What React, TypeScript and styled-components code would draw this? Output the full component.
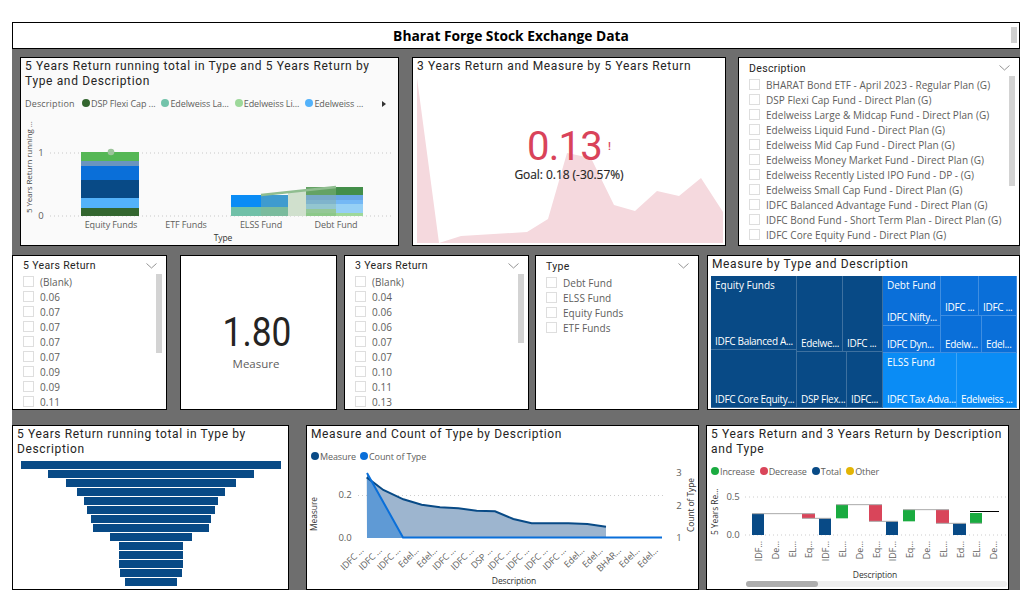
import React from 'react';
import styled, { createGlobalStyle } from 'styled-components';

const GlobalStyle = createGlobalStyle`
  html, body {
    margin: 0;
    padding: 0;
    background: #fff;
  }
`;

const Page = styled.div`
  width: 1008px;
  margin: 22px 0 0 12px;
  font-family: 'Open Sans', 'Noto Sans', sans-serif;
`;

const TitleBar = styled.header`
  position: relative;
  box-sizing: border-box;
  height: 27px;
  border: 1px solid #000;
  background: #fff;
  display: flex;
  align-items: center;
  justify-content: center;
  padding-right: 10px;
  font-size: 13.8px;
  font-weight: 700;
  color: #000;
`;

const TitleScroll = styled.div`
  position: absolute;
  right: 2px;
  top: 4px;
  width: 6px;
  height: 16px;
  background: #cfcfcf;
`;

const Panel = styled.main`
  background: #6e6e6e;
  height: 541px;
  padding-top: 8px;
  box-sizing: border-box;
`;

const Row = styled.section<{ $height: number; $mb?: number }>`
  display: flex;
  height: ${(p) => p.$height}px;
  margin-bottom: ${(p) => p.$mb ?? 0}px;
`;

const Card = styled.article<{ $w: number; $left?: number; $bg?: string }>`
  position: relative;
  box-sizing: border-box;
  width: ${(p) => p.$w}px;
  margin-left: ${(p) => p.$left ?? 0}px;
  flex: none;
  border: 1px solid #000;
  background: ${(p) => p.$bg ?? '#fff'};
  overflow: hidden;
  display: flex;
  flex-direction: column;
`;

const CardTitle = styled.h2`
  margin: 0;
  padding: 1px 4px 0 4px;
  font-family: 'Roboto', 'Noto Sans', sans-serif;
  font-size: 12px;
  font-weight: 400;
  line-height: 15px;
  letter-spacing: 0.64px;
  color: #252423;
`;

const Legend = styled.div<{ $left: number; $top: number }>`
  display: flex;
  align-items: center;
  gap: 3px;
  height: 14px;
  margin: ${(p) => p.$top}px 0 0 ${(p) => p.$left}px;
  font-size: 9px;
  letter-spacing: -0.1px;
  color: #605e5c;
  white-space: nowrap;
`;

const LegendName = styled.span`
  width: 54px;
  letter-spacing: 0.15px;
`;

const LegendItem = styled.span<{ $mr?: number }>`
  display: inline-flex;
  align-items: center;
  gap: 1px;
  margin-right: ${(p) => p.$mr ?? 0}px;
`;

const Dot = styled.i<{ $color: string }>`
  width: 8px;
  height: 8px;
  border-radius: 50%;
  background: ${(p) => p.$color};
`;

const LegendArrow = styled.span`
  position: absolute;
  right: 12px;
  top: 43px;
  width: 0;
  height: 0;
  border-left: 4px solid #333;
  border-top: 3px solid transparent;
  border-bottom: 3px solid transparent;
`;

const Chart = styled.svg`
  display: block;
  flex: none;
  font-family: 'Open Sans', 'Noto Sans', sans-serif;
`;

const GaugeValue = styled.div`
  position: absolute;
  left: 0;
  right: 0;
  top: 69px;
  display: flex;
  flex-direction: column;
  align-items: center;
`;

const GaugeNumber = styled.div`
  position: relative;
  font-family: 'Roboto', sans-serif;
  font-size: 40px;
  line-height: 40px;
  color: #d9435a;
  letter-spacing: -0.8px;
  padding-right: 9px;
`;

const GaugeBang = styled.span`
  position: absolute;
  right: 0;
  top: 13px;
  font-size: 11px;
  font-weight: 500;
  line-height: 14px;
  letter-spacing: 0;
`;

const GaugeGoal = styled.div`
  font-size: 12px;
  line-height: 14px;
  margin-top: 1px;
  color: #252423;
  letter-spacing: -0.05px;
  -webkit-text-stroke: 0.15px #252423;
`;

const SlicerHead = styled.div<{ $left: number }>`
  display: flex;
  align-items: center;
  justify-content: space-between;
  height: 19px;
  padding: 1px 9px 0 ${(p) => p.$left}px;
  box-sizing: border-box;
  font-family: 'Roboto', sans-serif;
  font-size: 10.5px;
  letter-spacing: 0.35px;
  color: #252423;
`;

const SlicerList = styled.ul<{ $left: number }>`
  list-style: none;
  margin: 0;
  padding: 0 0 0 ${(p) => p.$left}px;
`;

const SlicerRow = styled.li<{ $gap: number }>`
  display: flex;
  align-items: center;
  height: 15px;
  gap: ${(p) => p.$gap}px;
  font-size: 10px;
  letter-spacing: 0.04px;
  color: #605e5c;
  white-space: nowrap;
`;

const Check = styled.span`
  box-sizing: border-box;
  width: 11px;
  height: 11px;
  flex: none;
  border: 1px solid #dedede;
  background: #fff;
`;

const ScrollThumb = styled.div<{ $right: number; $top: number; $h: number }>`
  position: absolute;
  right: ${(p) => p.$right}px;
  top: ${(p) => p.$top}px;
  width: 6px;
  height: ${(p) => p.$h}px;
  background: #d3d3d3;
`;

const KpiCard = styled(Card)`
  align-items: center;
  justify-content: center;
  padding: 16px 3px 0 0;
`;

const KpiValue = styled.div`
  font-family: 'Roboto', sans-serif;
  font-size: 41px;
  line-height: 44px;
  color: #252423;
  transform: scaleX(0.86);
`;

const KpiLabel = styled.div`
  font-size: 11.5px;
  line-height: 16px;
  margin: 2px 2px 0 0;
  color: #605e5c;
`;

const Treemap = styled.div`
  display: flex;
  flex-direction: column;
  width: 306px;
  height: 132px;
  margin: 4px 0 0 3px;
`;

const TreeRow = styled.div<{ $h?: number }>`
  display: flex;
  ${(p) => (p.$h ? `height: ${p.$h}px; flex: none;` : 'flex: 1;')}
`;

const TreeCol = styled.div<{ $w: number }>`
  display: flex;
  flex-direction: column;
  width: ${(p) => p.$w}px;
  flex: none;
`;

const Tile = styled.div<{ $color: string; $w?: number; $h?: number }>`
  position: relative;
  box-sizing: border-box;
  ${(p) => (p.$w ? `width: ${p.$w}px; flex: none;` : 'flex: 1;')}
  ${(p) => (p.$h ? `height: ${p.$h}px; flex: none;` : '')}
  background: ${(p) => p.$color};
  box-shadow: inset -1px -1px 0 rgba(255, 255, 255, 0.22);
  color: #fff;
  font-size: 10px;
  letter-spacing: -0.32px;
  display: flex;
  flex-direction: column;
  justify-content: space-between;
  padding: 2px 3px 2px 4px;
  white-space: nowrap;
  overflow: hidden;
`;

const TileLabel = styled.span<{ $end?: boolean; $group?: boolean }>`
  line-height: 14px;
  ${(p) => (p.$end ? 'margin-top: auto;' : '')}
  ${(p) => (p.$group ? 'letter-spacing: 0;' : '')}
`;

const Funnel = styled.div`
  display: flex;
  flex-direction: column;
  align-items: center;
  gap: 1px;
  margin-top: 4px;
`;

const FunnelBar = styled.div<{ $w: number }>`
  width: ${(p) => p.$w}px;
  height: 8px;
  background: #084a86;
`;

const Tiny = ({ x, y, children, anchor, rotate, size = 9, fill = '#605e5c', weight }: {
  x: number; y: number; children: React.ReactNode; anchor?: 'start' | 'middle' | 'end';
  rotate?: number; size?: number; fill?: string; weight?: number;
}) => (
  <text
    x={x}
    y={y}
    fontSize={size}
    fill={fill}
    fontWeight={weight}
    textAnchor={anchor ?? 'middle'}
    letterSpacing={-0.1}
    transform={rotate ? `rotate(${rotate} ${x} ${y})` : undefined}
  >
    {children}
  </text>
);

const Chevron = () => (
  <svg width="11" height="6" viewBox="0 0 11 6">
    <polyline points="0.5,0.5 5.5,5 10.5,0.5" fill="none" stroke="#7a7a7a" strokeWidth="0.8" />
  </svg>
);

const Slicer = ({ title, items, left, gap, thumb, w, ml, headLeft }: {
  title: string; items: string[]; left: number; gap: number; w: number; ml?: number; headLeft: number;
  thumb?: { right: number; top: number; h: number };
}) => (
  <Card $w={w} $left={ml}>
    <SlicerHead $left={headLeft}>
      <span>{title}</span>
      <Chevron />
    </SlicerHead>
    <SlicerList $left={left}>
      {items.map((it, i) => (
        <SlicerRow key={i} $gap={gap}>
          <Check />
          <span>{it}</span>
        </SlicerRow>
      ))}
    </SlicerList>
    {thumb && <ScrollThumb $right={thumb.right} $top={thumb.top} $h={thumb.h} />}
  </Card>
);

const descriptions = [
  'BHARAT Bond ETF - April 2023 - Regular Plan (G)',
  'DSP Flexi Cap Fund - Direct Plan (G)',
  'Edelweiss Large & Midcap Fund - Direct Plan (G)',
  'Edelweiss Liquid Fund - Direct Plan (G)',
  'Edelweiss Mid Cap Fund - Direct Plan (G)',
  'Edelweiss Money Market Fund - Direct Plan (G)',
  'Edelweiss Recently Listed IPO Fund - DP - (G)',
  'Edelweiss Small Cap Fund - Direct Plan (G)',
  'IDFC Balanced Advantage Fund - Direct Plan (G)',
  'IDFC Bond Fund - Short Term Plan - Direct Plan (G)',
  'IDFC Core Equity Fund - Direct Plan (G)',
];

const funnelWidths = [260, 206, 170, 148, 134, 128, 120, 116, 82, 64, 64, 64, 62, 52];

const lineLabels = ['IDFC ...', 'IDFC ...', 'IDFC ...', 'Edel...', 'Edel...', 'IDFC ...', 'IDFC ...', 'DSP ...', 'IDFC ...', 'IDFC ...', 'IDFC ...', 'IDFC ...', 'Edel...', 'Edel...', 'BHAR...', 'Edel...', 'Edel...'];
const fallLabels = ['IDF...', 'De...', 'EL...', 'Eq...', 'IDF...', 'EL...', 'De...', 'Eq...', 'IDF...', 'Eq...', 'De...', 'EL...', 'Ed...', 'EL...', 'De...'];

// display coords from the 3x crops, converted to page px
const measureLine = [[200, 172], [250, 210], [310, 238], [365, 254], [420, 262], [475, 265], [530, 272], [585, 274], [640, 297], [695, 310], [750, 310], [805, 310], [862, 312], [918, 320]]
  .map(([x, y]) => `${300 + x / 3},${420 + y / 3}`)
  .join(' ');

const fallBars: [number, number, number, number, string][] = [
  [156, 192, 281, 345, '#084a86'],
  [306, 345, 281, 295, '#d9455a'],
  [357, 393, 295, 345, '#084a86'],
  [408, 444, 254, 295, '#1aab40'],
  [507, 546, 254, 304, '#d9455a'],
  [558, 594, 304, 345, '#084a86'],
  [609, 645, 269, 304, '#1aab40'],
  [708, 747, 269, 310, '#d9455a'],
  [759, 798, 310, 345, '#084a86'],
  [810, 846, 279, 310, '#1aab40'],
];

const fallLinks: [number, number, number][] = [
  [156, 345, 281], [306, 393, 295], [408, 546, 254], [507, 594, 304],
  [609, 747, 269], [708, 798, 310], [810, 846, 310],
];

const App: React.FC = () => (
  <Page>
    <GlobalStyle />
    <TitleBar>
      Bharat Forge Stock Exchange Data
      <TitleScroll />
    </TitleBar>
    <Panel>
      <Row $height={189} $mb={9}>
        <Card $w={379} $left={8} $bg="#fafafa">
          <CardTitle>5 Years Return running total in Type and 5 Years Return by Type and Description</CardTitle>
          <Legend $left={4} $top={7}>
            <LegendName>Description</LegendName>
            <LegendItem $mr={3}><Dot $color="#33662f" />DSP Flexi Cap ...</LegendItem>
            <LegendItem $mr={3}><Dot $color="#72c3aa" />Edelweiss La...</LegendItem>
            <LegendItem $mr={3}><Dot $color="#9dd89a" />Edelweiss Li...</LegendItem>
            <LegendItem><Dot $color="#53b2fa" />Edelweiss ...</LegendItem>
          </Legend>
          <LegendArrow />
          <Chart width={377} height={135} viewBox="21 110 377 135">
            <line x1="50" x2="392" y1="153" y2="153" stroke="#c8c8c8" strokeDasharray="1 3" />
            <line x1="50" x2="392" y1="216" y2="216" stroke="#c8c8c8" strokeDasharray="1 3" />
            <Tiny x={41} y={156} size={9.5}>1</Tiny>
            <Tiny x={41} y={219} size={9.5}>0</Tiny>
            <Tiny x={32} y={213} size={8} anchor="start" rotate={-90} fill="#444">5 Years Return running ...</Tiny>
            <rect x="81" y="152" width="58" height="9.5" fill="#55b755" />
            <rect x="81" y="161" width="58" height="5" fill="#6a94bf" />
            <rect x="81" y="166" width="58" height="14" fill="#0a6fd9" />
            <rect x="81" y="180" width="58" height="18" fill="#084a86" />
            <rect x="81" y="198" width="58" height="10" fill="#53b2fa" />
            <rect x="81" y="208" width="58" height="8" fill="#33662f" />
            <circle cx="111" cy="152" r="3.3" fill="#9cc49a" />
            <rect x="231" y="195" width="30" height="12" fill="#0a8cf5" />
            <rect x="231" y="207" width="30" height="9" fill="#70c0a8" />
            <rect x="261" y="195" width="27" height="12" fill="#3f9bcf" />
            <rect x="261" y="207" width="27" height="9" fill="#7abb9d" />
            <polygon points="288,192 306,190 306,216 288,216" fill="#d0e0cd" />
            <rect x="306" y="187" width="30" height="8" fill="#64a264" />
            <rect x="306" y="195" width="30" height="5" fill="#78aac8" />
            <rect x="306" y="200" width="30" height="4" fill="#7fb4cc" />
            <rect x="306" y="204" width="30" height="5" fill="#93c6d0" />
            <rect x="306" y="209" width="30" height="4" fill="#94c896" />
            <rect x="306" y="213" width="30" height="3" fill="#8cc888" />
            <rect x="336" y="187" width="27" height="8" fill="#438e49" />
            <rect x="336" y="195" width="27" height="5" fill="#6aa8e5" />
            <rect x="336" y="200" width="27" height="4" fill="#74b8f5" />
            <rect x="336" y="204" width="27" height="9" fill="#96d0f5" />
            <rect x="336" y="213" width="27" height="3" fill="#9ed89a" />
            <line x1="261" y1="195" x2="336" y2="187" stroke="#8fbd8f" strokeWidth="2.4" />
            <Tiny x={111} y={228} size={9}>Equity Funds</Tiny>
            <Tiny x={186} y={228} size={9}>ETF Funds</Tiny>
            <Tiny x={261} y={228} size={9}>ELSS Fund</Tiny>
            <Tiny x={336} y={228} size={9}>Debt Fund</Tiny>
            <Tiny x={223} y={241} size={8.5} fill="#333">Type</Tiny>
          </Chart>
        </Card>
        <Card $w={314} $left={13}>
          <CardTitle>3 Years Return and Measure by 5 Years Return</CardTitle>
          <Chart width={312} height={171} viewBox="413 74 312 171">
            <polygon
              points="417,78 439,243 461,236 527,232 548,219 567,153 591,158 614,205 635,211 657,191 679,196 701,178 723,212 723,243 417,243"
              fill="#f5d9de"
            />
          </Chart>
          <GaugeValue>
            <GaugeNumber>
              0.13
              <GaugeBang>!</GaugeBang>
            </GaugeNumber>
            <GaugeGoal>Goal: 0.18 (-30.57%)</GaugeGoal>
          </GaugeValue>
        </Card>
        <Slicer
          title="Description"
          items={descriptions}
          w={282}
          ml={12}
          left={10}
          gap={6}
          headLeft={10}
          thumb={{ right: 4, top: 18, h: 110 }}
        />
      </Row>
      <Row $height={155} $mb={15}>
        <Slicer
          title="5 Years Return"
          items={['(Blank)', '0.06', '0.07', '0.07', '0.07', '0.07', '0.09', '0.09', '0.11']}
          w={155}
          left={10}
          gap={6}
          headLeft={10}
          thumb={{ right: 4, top: 18, h: 79 }}
        />
        <KpiCard $w={157} $left={13}>
          <KpiValue>1.80</KpiValue>
          <KpiLabel>Measure</KpiLabel>
        </KpiCard>
        <Slicer
          title="3 Years Return"
          items={['(Blank)', '0.04', '0.06', '0.06', '0.07', '0.07', '0.10', '0.11', '0.13']}
          w={185}
          ml={7}
          left={10}
          gap={6}
          headLeft={10}
          thumb={{ right: 4, top: 18, h: 69 }}
        />
        <Slicer
          title="Type"
          items={['Debt Fund', 'ELSS Fund', 'Equity Funds', 'ETF Funds']}
          w={164}
          ml={6}
          left={10}
          gap={6}
          headLeft={10}
        />
        <Card $w={313} $left={8}>
          <CardTitle>Measure by Type and Description</CardTitle>
          <Treemap>
            <TreeRow $h={132}>
              <TreeCol $w={86}>
                <Tile $color="#084a86" $h={74}>
                  <TileLabel $group>Equity Funds</TileLabel>
                  <TileLabel>IDFC Balanced A...</TileLabel>
                </Tile>
                <Tile $color="#084a86"><TileLabel $end>IDFC Core Equity...</TileLabel></Tile>
              </TreeCol>
              <TreeCol $w={86}>
                <TreeRow $h={76}>
                  <Tile $color="#084a86" $w={46}><TileLabel $end>Edelwe...</TileLabel></Tile>
                  <Tile $color="#084a86"><TileLabel $end>IDFC ...</TileLabel></Tile>
                </TreeRow>
                <TreeRow>
                  <Tile $color="#084a86" $w={50}><TileLabel $end>DSP Flex...</TileLabel></Tile>
                  <Tile $color="#084a86"><TileLabel $end>IDFC...</TileLabel></Tile>
                </TreeRow>
              </TreeCol>
              <TreeCol $w={134}>
                <TreeRow $h={77}>
                  <TreeCol $w={58}>
                    <Tile $color="#0a6fd9" $h={50}>
                      <TileLabel $group>Debt Fund</TileLabel>
                      <TileLabel>IDFC Nifty...</TileLabel>
                    </Tile>
                    <Tile $color="#0a6fd9"><TileLabel $end>IDFC Dyn...</TileLabel></Tile>
                  </TreeCol>
                  <TreeCol $w={76}>
                    <TreeRow $h={40}>
                      <Tile $color="#0a6fd9" $w={38}><TileLabel $end>IDFC ...</TileLabel></Tile>
                      <Tile $color="#0a6fd9"><TileLabel $end>IDFC ...</TileLabel></Tile>
                    </TreeRow>
                    <TreeRow>
                      <Tile $color="#0a6fd9" $w={41}><TileLabel $end>Edelw...</TileLabel></Tile>
                      <Tile $color="#0a6fd9"><TileLabel $end>Edel...</TileLabel></Tile>
                    </TreeRow>
                  </TreeCol>
                </TreeRow>
                <TreeRow>
                  <Tile $color="#0a8cf5" $w={74}>
                    <TileLabel $group>ELSS Fund</TileLabel>
                    <TileLabel>IDFC Tax Adva...</TileLabel>
                  </Tile>
                  <Tile $color="#0a8cf5"><TileLabel $end>Edelweiss ...</TileLabel></Tile>
                </TreeRow>
              </TreeCol>
            </TreeRow>
          </Treemap>
        </Card>
      </Row>
      <Row $height={165}>
        <Card $w={277}>
          <CardTitle>5 Years Return running total in Type by Description</CardTitle>
          <Funnel>
            {funnelWidths.map((w, i) => (
              <FunnelBar key={i} $w={w} />
            ))}
          </Funnel>
        </Card>
        <Card $w={393} $left={17}>
          <CardTitle>Measure and Count of Type by Description</CardTitle>
          <Legend $left={4} $top={7}>
            <LegendItem $mr={1}><Dot $color="#084a86" />Measure</LegendItem>
            <LegendItem><Dot $color="#0a6fd9" />Count of Type</LegendItem>
          </Legend>
          <Chart width={391} height={126} viewBox="307 463 391 126">
            <line x1="358" x2="664" y1="495.5" y2="495.5" stroke="#ccc" strokeDasharray="1 3" />
            <polygon points={`${measureLine} 606,538 367,538`} fill="#9db5cf" />
            <polygon points="367,473 403,538 367,538" fill="#5f9ad5" />
            <polyline points={measureLine} fill="none" stroke="#084a86" strokeWidth="2" />
            <polyline points="367,473 403,537.5 662,537.5" fill="none" stroke="#0a6fd9" strokeWidth="2" />
            <Tiny x={345} y={498} size={9.5}>0.2</Tiny>
            <Tiny x={345} y={541} size={9.5}>0.0</Tiny>
            <Tiny x={317} y={514} size={8.5} rotate={-90} fill="#333">Measure</Tiny>
            <Tiny x={679} y={476} size={9.5}>3</Tiny>
            <Tiny x={679} y={509} size={9.5}>2</Tiny>
            <Tiny x={679} y={541} size={9.5}>1</Tiny>
            <Tiny x={694} y={505} size={8.5} rotate={-90} fill="#333">Count of Type</Tiny>
            {lineLabels.map((l, i) => (
              <Tiny key={i} x={364 + i * 18.4} y={551} anchor="end" rotate={-45} size={9}>{l}</Tiny>
            ))}
            <Tiny x={514} y={584} size={8.5} fill="#333">Description</Tiny>
          </Chart>
        </Card>
        <Card $w={303} $left={7}>
          <CardTitle>5 Years Return and 3 Years Return by Description and Type</CardTitle>
          <Legend $left={4} $top={7}>
            <LegendItem $mr={2}><Dot $color="#1aab40" />Increase</LegendItem>
            <LegendItem $mr={2}><Dot $color="#d9455a" />Decrease</LegendItem>
            <LegendItem $mr={2}><Dot $color="#084a86" />Total</LegendItem>
            <LegendItem><Dot $color="#e3b505" />Other</LegendItem>
          </Legend>
          <Chart width={301} height={111} viewBox="707 478 301 111">
            <line x1="745" x2="1006" y1="497" y2="497" stroke="#ccc" strokeDasharray="1 3" />
            <line x1="745" x2="1006" y1="535" y2="535" stroke="#ccc" strokeDasharray="1 3" />
            {fallBars.map(([x1, x2, y1, y2, c], i) => (
              <rect key={i} x={700 + x1 / 3} y={420 + y1 / 3} width={(x2 - x1) / 3} height={(y2 - y1) / 3} fill={c} />
            ))}
            {fallLinks.map(([x1, x2, y], i) => (
              <line key={i} x1={700 + x1 / 3} x2={700 + x2 / 3} y1={420 + y / 3} y2={420 + y / 3} stroke="#aaa" />
            ))}
            <line x1="970" x2="999" y1="511.5" y2="511.5" stroke="#000" />
            <Tiny x={733} y={500} size={9.5}>0.5</Tiny>
            <Tiny x={733} y={538} size={9.5}>0.0</Tiny>
            <Tiny x={718} y={535} size={8.5} anchor="start" rotate={-90} fill="#333">5 Years Re...</Tiny>
            {fallLabels.map((l, i) => (
              <Tiny key={i} x={762 + i * 16.8} y={541} anchor="end" rotate={-90} size={9}>{l}</Tiny>
            ))}
            <Tiny x={875} y={578} size={8.5} fill="#333">Description</Tiny>
            <rect x="746" y="581" width="261" height="6" rx="3" fill="#efefef" />
            <rect x="746" y="581" width="72" height="6" rx="3" fill="#adadad" />
          </Chart>
        </Card>
      </Row>
    </Panel>
  </Page>
);

export default App;
